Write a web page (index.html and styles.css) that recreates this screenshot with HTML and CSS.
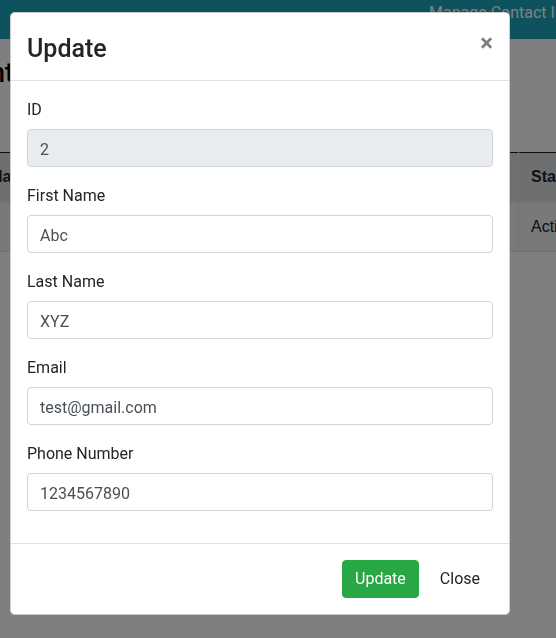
FILE: index.html
```html
<!DOCTYPE html>
<html lang="en">
<head>
<meta charset="utf-8">
<title>Manage Contact Info</title>
<link rel="stylesheet" href="styles.css">
</head>
<body>
<div class="page">
  <nav class="navbar"><span class="brand">Manage Contact Info</span></nav>
  <h2 class="page-title">Contact Management</h2>
  <table class="contacts">
    <thead>
      <tr><th class="c-name">Name</th><th class="c-email">Email</th><th class="c-phone">Phone Number</th><th class="c-status">Status</th><th class="c-action">Action</th></tr>
    </thead>
    <tbody>
      <tr><td class="name-cell">Abc XYZ</td><td>test@gmail.com</td><td>1234567890</td><td>Active</td><td>Edit</td></tr>
    </tbody>
  </table>
</div>

<div class="backdrop"></div>

<div class="modal">
  <div class="modal-content">
    <div class="modal-header">
      <h3 class="modal-title">Update</h3>
      <button class="close" type="button">&times;</button>
    </div>
    <div class="modal-body">
      <div class="form-group">
        <label>ID</label>
        <input class="form-control" type="text" value="2" disabled>
      </div>
      <div class="form-group">
        <label>First Name</label>
        <input class="form-control" type="text" value="Abc">
      </div>
      <div class="form-group">
        <label>Last Name</label>
        <input class="form-control" type="text" value="XYZ">
      </div>
      <div class="form-group">
        <label>Email</label>
        <input class="form-control" type="text" value="test@gmail.com">
      </div>
      <div class="form-group">
        <label>Phone Number</label>
        <input class="form-control" type="text" value="1234567890">
      </div>
    </div>
    <div class="modal-footer">
      <button class="btn btn-success" type="button">Update</button>
      <button class="btn btn-plain" type="button">Close</button>
    </div>
  </div>
</div>
</body>
</html>
```

FILE: styles.css
```css
* { box-sizing: border-box; }

html, body {
  margin: 0;
  padding: 0;
  width: 556px;
  height: 638px;
  overflow: hidden;
}

body {
  background: #fff;
  font-family: Roboto, "Liberation Sans", sans-serif;
  font-size: 16px;
  line-height: 1.5;
  color: #212529;
}

.page {
  display: flex;
  flex-direction: column;
}

.navbar {
  height: 39px;
  background: #1ba4b8;
  padding: 1px 0 0 429px;
  white-space: nowrap;
  overflow: hidden;
}

.brand {
  color: #fff;
  font-size: 16px;
  line-height: 20px;
}

.page-title {
  margin: 18px 0 0 -43px;
  font-size: 27px;
  font-weight: 500;
  line-height: 33px;
  white-space: nowrap;
  color: #000;
}

.contacts {
  margin: 62px 0 0 -22px;
  border-collapse: collapse;
  table-layout: fixed;
  width: 780px;
  font-family: "Liberation Sans", Arial, sans-serif;
  font-size: 16px;
  color: #212529;
}

.c-name { width: 140px; }
.c-email { width: 240px; }
.c-phone { width: 160px; }
.c-status { width: 120px; }
.c-action { width: 120px; }

.contacts th,
.contacts td {
  padding: 12px;
  text-align: left;
  border: 1px solid #dee2e6;
  white-space: nowrap;
  overflow: hidden;
  line-height: 24px;
}

.contacts td.name-cell {
  text-align: center;
}

.contacts thead th {
  background: #dcdee0;
  border-top: 1px solid #1a1a1a;
  border-bottom: 2px solid #dee2e6;
  font-weight: 700;
}

.contacts tbody tr {
  background: #f2f2f2;
}

.backdrop {
  position: fixed;
  inset: 0;
  background: rgba(0, 0, 0, 0.5);
}

.modal {
  position: fixed;
  inset: 0;
  padding: 12px 0 0 10px;
  display: flex;
  align-items: flex-start;
}

.modal-content {
  width: 500px;
  background: #fff;
  border: 1px solid rgba(0, 0, 0, 0.2);
  border-radius: 5px;
  display: flex;
  flex-direction: column;
}

.modal-header {
  display: flex;
  align-items: flex-start;
  padding: 18px 16px 14px;
  border-bottom: 1px solid #dee2e6;
}

.modal-title {
  margin: 0;
  font-size: 25px;
  font-weight: 500;
  line-height: 35px;
  color: #212529;
}

.close {
  margin: -16px -16px -16px auto;
  padding: 16px;
  background: transparent;
  border: 0;
  font-family: Roboto, "Liberation Sans", sans-serif;
  font-size: 24px;
  font-weight: 700;
  line-height: 1;
  color: #000;
  opacity: 0.5;
  cursor: pointer;
}

.modal-body {
  padding: 16px;
}

.form-group {
  margin-bottom: 16px;
}

.form-group label {
  display: block;
  padding-top: 1px;
  margin-bottom: 7px;
  line-height: 24px;
}

.form-control {
  display: block;
  width: 100%;
  height: 38px;
  padding: 7px 12px 5px;
  font-family: Roboto, "Liberation Sans", sans-serif;
  font-size: 16px;
  line-height: 24px;
  color: #495057;
  background: #fff;
  border: 1px solid #ced4da;
  border-radius: 4px;
}

.form-control:disabled {
  background: #e9ecef;
  color: #495057;
  opacity: 1;
}

.modal-footer {
  display: flex;
  justify-content: flex-end;
  align-items: center;
  padding: 12px;
  border-top: 1px solid #dee2e6;
}

.btn {
  margin: 4px;
  padding: 6px 12px;
  font-family: Roboto, "Liberation Sans", sans-serif;
  font-size: 16px;
  line-height: 24px;
  border: 1px solid transparent;
  border-radius: 4px;
  cursor: pointer;
}

.btn-success {
  background: #28a745;
  border-color: #28a745;
  color: #fff;
}

.btn-plain {
  background: transparent;
  color: #212529;
}
```
